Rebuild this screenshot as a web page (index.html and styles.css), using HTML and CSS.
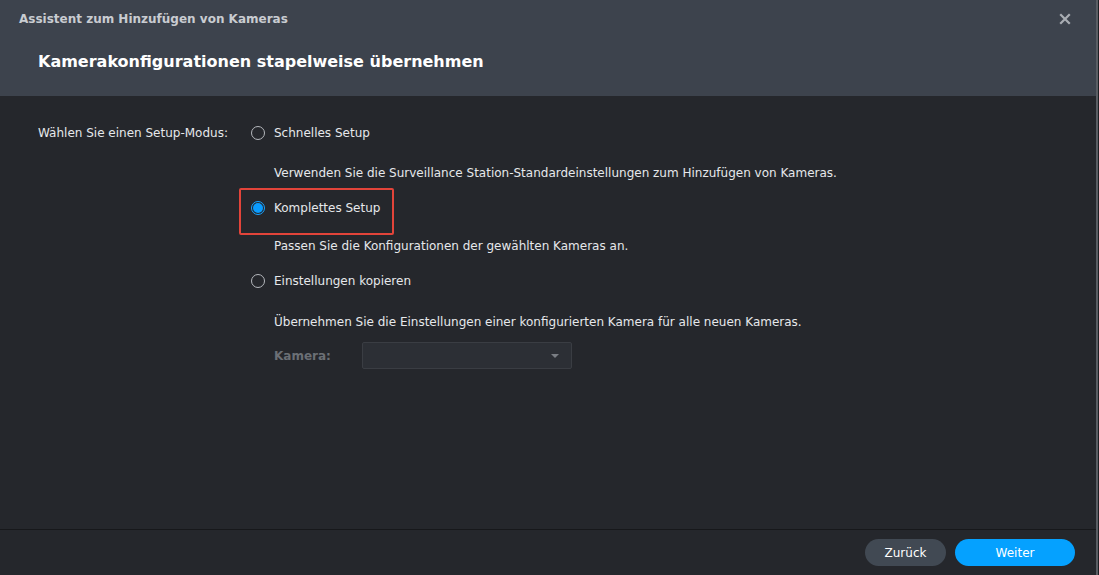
FILE: index.html
```html
<!DOCTYPE html>
<html lang="de">
<head>
<meta charset="utf-8">
<title>Assistent zum Hinzufügen von Kameras</title>
<link rel="stylesheet" href="styles.css">
</head>
<body>
<div class="dialog">
  <header class="head">
    <div class="titlebar">
      <span class="title">Assistent zum Hinzufügen von Kameras</span>
      <svg class="close" width="12" height="12" viewBox="0 0 12 12"><path d="M2 2 L10 10 M10 2 L2 10" stroke="#a9adb3" stroke-width="2.2" stroke-linecap="square"/></svg>
    </div>
    <h1 class="subtitle">Kamerakonfigurationen stapelweise übernehmen</h1>
  </header>
  <main class="content">
    <div class="label">Wählen Sie einen Setup-Modus:</div>
    <div class="options">
      <div class="opt">
        <span class="radio"></span><span class="opt-text">Schnelles Setup</span>
      </div>
      <div class="desc d1">Verwenden Sie die Surveillance Station-Standardeinstellungen zum Hinzufügen von Kameras.</div>
      <div class="opt selected-wrap">
        <span class="radio on"></span><span class="opt-text">Komplettes Setup</span>
        <span class="highlight"></span>
      </div>
      <div class="desc d2">Passen Sie die Konfigurationen der gewählten Kameras an.</div>
      <div class="opt">
        <span class="radio"></span><span class="opt-text">Einstellungen kopieren</span>
      </div>
      <div class="desc d3">Übernehmen Sie die Einstellungen einer konfigurierten Kamera für alle neuen Kameras.</div>
      <div class="camrow">
        <span class="camlabel">Kamera:</span>
        <div class="select"><span class="caret"></span></div>
      </div>
    </div>
  </main>
  <footer class="foot">
    <button class="btn back">Zurück</button>
    <button class="btn next">Weiter</button>
  </footer>
</div>
</body>
</html>
```
FILE: styles.css
```css
* { box-sizing: border-box; }
html, body { margin: 0; padding: 0; }
body {
  background: #1d1f23;
  width: 1099px;
  height: 575px;
  overflow: hidden;
  font-family: "DejaVu Sans", Verdana, sans-serif;
  font-size: 12px;
  color: #e6e8eb;
}
.dialog {
  width: 1098px;
  height: 575px;
  border-right: 2px solid #5a5e64;
  background: #25272c;
  display: flex;
  flex-direction: column;
}
.head {
  background: #3d434d;
  height: 96px;
  padding: 0 20px 0 19px;
}
.titlebar {
  height: 37px;
  display: flex;
  align-items: center;
  justify-content: space-between;
  padding-top: 1px;
}
.title {
  font-weight: bold;
  font-size: 12px;
  color: #c9ccd1;
}
.close { margin-right: 5px; margin-top: -1px; }
.subtitle {
  margin: 0;
  padding-left: 19px;
  padding-top: 15px;
  font-size: 16px;
  font-weight: bold;
  color: #ffffff;
}
.content {
  flex: 1;
  display: flex;
  padding: 29px 0 0 38px;
  border-bottom: 1px solid #17181b;
}
.label {
  width: 213px;
  line-height: 16px;
}
.options {
  display: flex;
  flex-direction: column;
}
.opt {
  position: relative;
  display: flex;
  align-items: center;
  height: 16px;
}
.radio {
  width: 14px;
  height: 14px;
  border-radius: 50%;
  border: 1px solid #b5b8bd;
  margin-right: 9px;
}
.radio.on {
  border: 1px solid #1aa3ff;
  background: #25272c;
  position: relative;
}
.radio.on::after {
  content: "";
  position: absolute;
  left: 1px; top: 1px;
  width: 10px; height: 10px;
  border-radius: 50%;
  background: #0a9cff;
}
.highlight {
  position: absolute;
  left: -12px;
  top: -12px;
  width: 155px;
  height: 47px;
  border: 2px solid #e2443a;
  border-radius: 2px;
}
.desc {
  padding-left: 23px;
  line-height: 16px;
}
.d1 { margin-top: 24px; margin-bottom: 19px; }
.d2 { margin-top: 22px; margin-bottom: 19px; }
.d3 { margin-top: 25px; }
.camrow {
  display: flex;
  align-items: center;
  margin-top: 12px;
  padding-left: 23px;
}
.camlabel {
  width: 88px;
  color: #6b6f75;
  font-weight: bold;
}
.select {
  position: relative;
  width: 210px;
  height: 27px;
  background: #2c2f35;
  border: 1px solid #3a3d43;
  border-radius: 2px;
}
.caret {
  position: absolute;
  right: 12px;
  top: 11px;
  border-left: 4px solid transparent;
  border-right: 4px solid transparent;
  border-top: 4px solid #7a7e84;
}
.foot {
  height: 45px;
  display: flex;
  justify-content: flex-end;
  align-items: center;
  gap: 9px;
  padding: 0 21px 0 0;
}
.btn {
  font-family: "DejaVu Sans", Verdana, sans-serif;
  font-size: 12px;
  height: 27px;
  border: none;
  border-radius: 14px;
  color: #ffffff;
  cursor: pointer;
}
.back { width: 81px; background: #414953; }
.next { width: 120px; background: #05a1ff; }
```
